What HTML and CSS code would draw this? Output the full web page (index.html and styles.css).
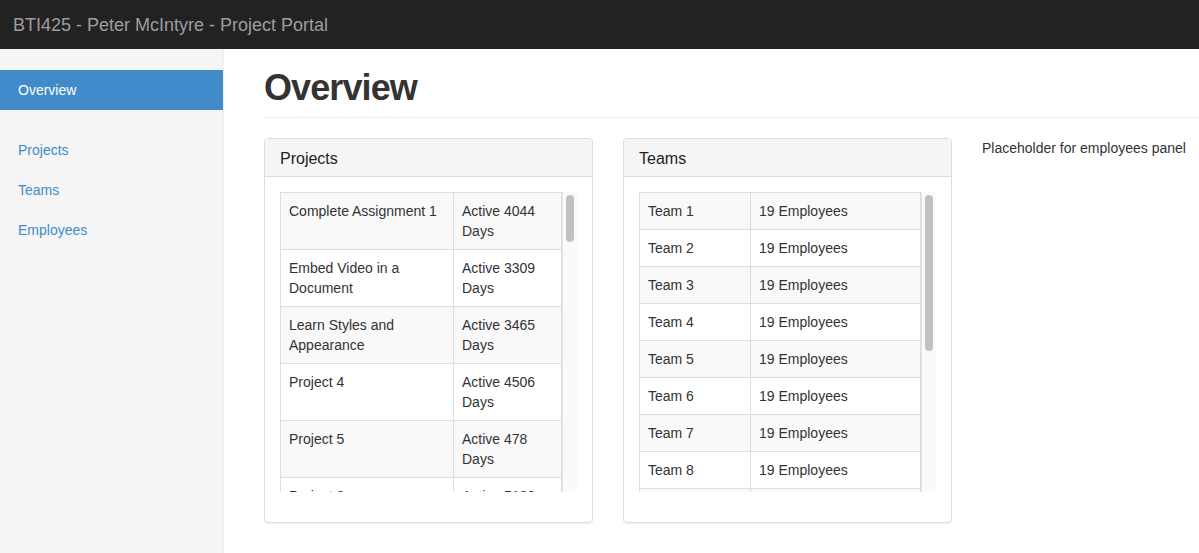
FILE: index.html
```html
<!DOCTYPE html>
<html lang="en">
<head>
<meta charset="utf-8">
<title>BTI425 - Project Portal</title>
<link rel="stylesheet" href="styles.css">
</head>
<body>
<header class="navbar"><span class="brand">BTI425 - Peter McIntyre - Project Portal</span></header>
<div class="layout">
  <aside class="sidebar">
    <ul class="nav nav-first">
      <li class="active"><a href="#">Overview</a></li>
    </ul>
    <ul class="nav">
      <li><a href="#">Projects</a></li>
      <li><a href="#">Teams</a></li>
      <li><a href="#">Employees</a></li>
    </ul>
  </aside>
  <main class="main">
    <h1 class="page-header">Overview</h1>
    <div class="row">
      <section class="panel">
        <div class="panel-heading"><h3 class="panel-title">Projects</h3></div>
        <div class="panel-body">
          <div class="scroller">
            <div class="viewport">
              <table class="table projects">
                <tbody>
                  <tr><td>Complete Assignment 1</td><td>Active 4044 Days</td></tr>
                  <tr><td>Embed Video in a Document</td><td>Active 3309 Days</td></tr>
                  <tr><td>Learn Styles and Appearance</td><td>Active 3465 Days</td></tr>
                  <tr><td>Project 4</td><td>Active 4506 Days</td></tr>
                  <tr><td>Project 5</td><td>Active 478 Days</td></tr>
                  <tr><td>Project 6</td><td>Active 5133 Days</td></tr>
                  <tr><td>Project 7</td><td>Active 2871 Days</td></tr>
                </tbody>
              </table>
            </div>
            <div class="sbar"><div class="thumb thumb-projects"></div></div>
          </div>
        </div>
      </section>
      <section class="panel">
        <div class="panel-heading"><h3 class="panel-title">Teams</h3></div>
        <div class="panel-body">
          <div class="scroller">
            <div class="viewport">
              <table class="table teams">
                <tbody>
                  <tr><td>Team 1</td><td>19 Employees</td></tr>
                  <tr><td>Team 2</td><td>19 Employees</td></tr>
                  <tr><td>Team 3</td><td>19 Employees</td></tr>
                  <tr><td>Team 4</td><td>19 Employees</td></tr>
                  <tr><td>Team 5</td><td>19 Employees</td></tr>
                  <tr><td>Team 6</td><td>19 Employees</td></tr>
                  <tr><td>Team 7</td><td>19 Employees</td></tr>
                  <tr><td>Team 8</td><td>19 Employees</td></tr>
                  <tr><td>Team 9</td><td>19 Employees</td></tr>
                  <tr><td>Team 10</td><td>19 Employees</td></tr>
                </tbody>
              </table>
            </div>
            <div class="sbar"><div class="thumb thumb-teams"></div></div>
          </div>
        </div>
      </section>
      <div class="placeholder">Placeholder for employees panel</div>
    </div>
  </main>
</div>
</body>
</html>
```

FILE: styles.css
```css
* { box-sizing: border-box; }
html, body { margin: 0; padding: 0; }
body {
  font-family: "Liberation Sans", Arial, sans-serif;
  font-size: 14px;
  line-height: 20px;
  color: #333;
  background: #fff;
  overflow: hidden;
}
a { text-decoration: none; color: #428bca; }

.navbar {
  height: 49px;
  background: #222;
  display: flex;
  align-items: center;
  padding-left: 13px;
}
.brand {
  font-size: 18px;
  line-height: 20px;
  color: #9d9d9d;
  white-space: nowrap;
}

.layout {
  display: flex;
  min-height: calc(100vh - 49px);
}
.sidebar {
  width: 224px;
  flex: none;
  background: #f5f5f5;
  border-right: 1px solid #eee;
  padding-top: 21px;
}
.nav { list-style: none; margin: 0 0 20px; padding: 0; }
.nav a {
  display: block;
  padding: 10px 18px;
  line-height: 20px;
}
.nav .active a { background: #428bca; color: #fff; }

.main {
  flex: 1;
  min-width: 0;
  overflow: hidden;
  padding: 19px 0 0 40px;
}
.page-header {
  margin: 0 0 20px;
  padding-bottom: 9px;
  border-bottom: 1px solid #eee;
  font-size: 36px;
  line-height: 39.6px;
  font-weight: 700;
  color: #333;
  letter-spacing: -0.9px;
}

.row {
  display: grid;
  grid-template-columns: 329px 329px 329px;
  gap: 30px;
  align-items: start;
}
.panel {
  border: 1px solid #ddd;
  border-radius: 4px;
  background: #fff;
  box-shadow: 0 1px 1px rgba(0,0,0,.05);
}
.panel-heading {
  background: #f5f5f5;
  border-bottom: 1px solid #ddd;
  border-radius: 3px 3px 0 0;
  padding: 11px 15px 9px;
}
.panel-title {
  margin: 0;
  font-size: 16px;
  line-height: 17.6px;
  font-weight: 500;
  color: #222;
}
.panel-body { padding: 15px 15px 30px; }

.scroller {
  display: flex;
  height: 300px;
}
.viewport {
  flex: 1;
  min-width: 0;
  overflow: hidden;
}
.sbar {
  flex: none;
  width: 15px;
  background: #fafafa;
  border-left: 1px solid #e4e4e4;
  padding: 3px 3px 0 3px;
}
.thumb {
  width: 8px;
  background: #c1c1c1;
  border-radius: 4px;
}
.thumb-projects { height: 47px; }
.thumb-teams { height: 156px; }

.table {
  width: 100%;
  border-collapse: collapse;
  margin-bottom: 20px;
  table-layout: fixed;
}
.table td {
  border: 1px solid #ddd;
  padding: 8px;
  vertical-align: top;
  line-height: 20px;
}
.table tr:nth-child(odd) td { background: #f9f9f9; }
.projects td:first-child { width: 173px; }
.teams td:first-child { width: 111px; }

.placeholder {
  white-space: nowrap;
  line-height: 20px;
}
```
